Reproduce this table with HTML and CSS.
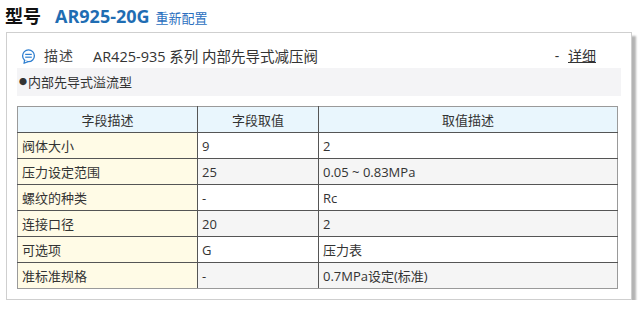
FILE: index.html
```html
<!DOCTYPE html>
<html>
<head>
<meta charset="utf-8">
<link rel="stylesheet" href="styles.css">
</head>
<body>
<div class="title">
  <span class="label">型号</span>
  <span class="model">AR925-20G</span>
  <a class="reconf">重新配置</a>
</div>
<div class="panel">
  <div class="head">
    <svg class="icon" width="15" height="15" viewBox="0 0 15 15">
      <circle cx="7.5" cy="6.8" r="5.9" fill="#fff" stroke="#2f7fd0" stroke-width="1.3"/>
      <path d="M3.6 11 L3 14.3 L7 12.6" fill="#fff" stroke="#2f7fd0" stroke-width="1.2" stroke-linejoin="round"/>
      <line x1="4.2" y1="5.4" x2="10.8" y2="5.4" stroke="#2f7fd0" stroke-width="1.2"/>
      <line x1="4.2" y1="8.2" x2="10.8" y2="8.2" stroke="#2f7fd0" stroke-width="1.2"/>
    </svg>
    <span class="desc-label">描述</span>
    <span class="desc-text">AR425-935 系列 内部先导式减压阀</span>
    <span class="more">- <a>详细</a></span>
  </div>
  <div class="note"><span class="dot">●</span>内部先导式溢流型</div>
  <table class="spec">
    <colgroup><col class="c1"><col class="c2"><col class="c3"></colgroup>
    <thead>
      <tr><th>字段描述</th><th>字段取值</th><th>取值描述</th></tr>
    </thead>
    <tbody>
      <tr><td class="k">阀体大小</td><td>9</td><td>2</td></tr>
      <tr class="alt"><td class="k">压力设定范围</td><td>25</td><td>0.05 ~ 0.83MPa</td></tr>
      <tr><td class="k">螺纹的种类</td><td>-</td><td>Rc</td></tr>
      <tr class="alt"><td class="k">连接口径</td><td>20</td><td>2</td></tr>
      <tr><td class="k">可选项</td><td>G</td><td>压力表</td></tr>
      <tr class="alt"><td class="k">准标准规格</td><td>-</td><td>0.7MPa设定(标准)</td></tr>
    </tbody>
  </table>
</div>
</body>
</html>
```

FILE: styles.css
```css
html, body {
  margin: 0;
  padding: 0;
  background: #fff;
}
body {
  font-family: "Open Sans", "Noto Sans CJK SC", sans-serif;
  font-size: 13px;
  color: #333;
}
.title {
  height: 33px;
  padding-left: 5px;
  display: flex;
  align-items: baseline;
  line-height: 33px;
  margin-top: -1px;
}
.label {
  font-size: 18px;
  font-weight: bold;
  color: #111;
  font-family: "Noto Sans CJK SC", sans-serif;
}
.model {
  margin-left: 14px;
  font-size: 18px;
  font-weight: bold;
  color: #1f6db3;
  font-family: "Open Sans", sans-serif;
}
.reconf {
  margin-left: 6px;
  font-size: 13px;
  color: #2a6fc0;
}
.panel {
  margin-left: 6px;
  width: 604px;
  border: 1px solid #cfcfcf;
  padding: 9px 10px 10px 10px;
  box-shadow: 4px 4px 2px #b4b4b4;
}
.head {
  display: flex;
  align-items: center;
  height: 26px;
  font-size: 14px;
}
.icon {
  margin-left: 4px;
  margin-top: 3px;
}
.desc-label {
  margin-left: 8px;
  color: #444;
  letter-spacing: 1px;
}
.desc-text {
  margin-left: 19px;
  font-size: 14.5px;
  color: #333;
}
.more {
  margin-left: auto;
  margin-right: 25px;
  color: #333;
}
.more a {
  margin-left: 5px;
  text-decoration: underline;
  color: #333;
}
.note {
  background: #f4f4f6;
  height: 28px;
  line-height: 28px;
  padding-left: 2px;
}
.dot {
  font-size: 8px;
  vertical-align: 2px;
  margin-right: 1px;
}
.spec {
  margin-top: 10px;
  width: 600px;
  table-layout: fixed;
  border-collapse: collapse;
  border: 1px solid #9a9a9a;
}
.c1 { width: 180px; }
.c2 { width: 121px; }
.c3 { width: 299px; }
.spec th {
  background: #e9f6fd;
  font-weight: normal;
  height: 25px;
  border-left: 1px solid #555;
  border-bottom: 1px solid #555;
  color: #333;
  padding: 0;
}
.spec td {
  height: 25px;
  padding: 0 4px;
  border: 1px solid #555;
  background: #fff;
}
.spec tr.alt td {
  background: #f5f5f5;
}
.spec td.k,
.spec tr.alt td.k {
  background: #fffbe6;
}
.spec tr:last-child td {
  border-bottom-color: #9a9a9a;
}
.spec td:first-child,
.spec th:first-child {
  border-left-color: #9a9a9a;
}
.spec td:last-child {
  border-right-color: #9a9a9a;
}
```
